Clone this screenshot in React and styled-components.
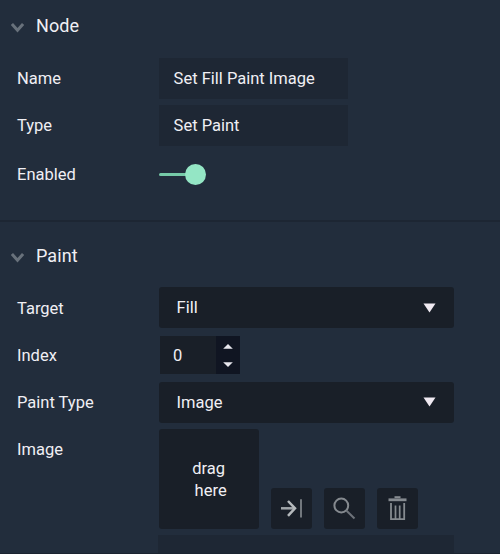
import React from "react";
import styled, { createGlobalStyle } from "styled-components";

const GlobalStyle = createGlobalStyle`
  * { box-sizing: border-box; }
  body {
    margin: 0;
    background: #222d3c;
    color: #f0eff4;
    font-family: Roboto, "Liberation Sans", sans-serif;
    overflow: hidden;
  }
`;

const Panel = styled.main`
  display: flex;
  flex-direction: column;
  height: 554px;
  overflow: hidden;
  border-bottom: 1px solid #1b2430;
`;

const Section = styled.section`
  flex: none;
  height: ${(p) => p.$height || "auto"};
  border-bottom: ${(p) => (p.$divided ? "2px solid #1d2633" : "none")};
`;

const SectionHeader = styled.header`
  display: flex;
  align-items: center;
  gap: 12px;
  height: ${(p) => p.$height}px;
  padding: ${(p) => p.$top || 0}px 0 ${(p) => p.$bottom || 0}px 11px;
`;

const Title = styled.h2`
  margin: 0;
  font-size: 18px;
  line-height: 24px;
  font-weight: 400;
  letter-spacing: 0.1px;
`;

const Rows = styled.div`
  display: grid;
  row-gap: 6.25px;
`;

const Row = styled.div`
  display: grid;
  grid-template-columns: 141.6px 1fr;
  min-height: 41px;
  padding-left: 17px;
  font-size: 16.5px;
  line-height: 41px;
`;

const Label = styled.span`
  margin: ${(p) => p.$drop || 0}px 0 ${(p) => -(p.$drop || 0)}px;
  white-space: nowrap;
`;

const Field = styled.div`
  width: 189px;
  height: 41px;
  padding-left: 15px;
  background: #1e2734;
`;

const Toggle = styled.div`
  display: flex;
  align-items: center;
  height: 41px;
  padding-top: 3px;
`;

const Track = styled.span`
  width: 27px;
  height: 3px;
  border-radius: 2px 0 0 2px;
  background: #76caa8;
`;

const Knob = styled.span`
  width: 21px;
  height: 21px;
  margin-left: -1px;
  border-radius: 50%;
  background: #94e6c5;
`;

const Select = styled.div`
  display: flex;
  align-items: center;
  justify-content: space-between;
  width: 295px;
  height: 41px;
  padding: 0 18px;
  border-radius: 3px;
  background: #191f28;
`;

const NumberInput = styled.div`
  display: grid;
  grid-template-columns: 56px 24px;
  width: 80px;
  height: 38px;
  margin: 1px 0 0 1.4px;
  line-height: 39px;
  background: #191f28;
`;

const NumberValue = styled.span`
  height: 38px;
  padding-left: 13px;
`;

const Stepper = styled.span`
  display: flex;
  flex-direction: column;
  align-items: center;
  justify-content: space-between;
  height: 38px;
  padding: 8px 0 7px;
  background: #101522;
`;

const ImageControls = styled.div`
  display: flex;
  align-items: flex-end;
  gap: 12px;
`;

const DropZone = styled.div`
  display: flex;
  flex-direction: column;
  align-items: center;
  justify-content: center;
  width: 100px;
  height: 100px;
  padding-top: 1px;
  border-radius: 3px;
  background: #191f28;
  line-height: 22px;
  white-space: pre;
`;

const IconButton = styled.button`
  display: grid;
  place-items: center;
  width: 41px;
  height: 41px;
  padding: 0;
  border: 0;
  border-radius: 3px;
  background: #191f28;
`;

const PathField = styled.div`
  width: 296px;
  height: 41px;
  margin-left: 158px;
  background: #1e2734;
`;

const Chevron = () => (
  <svg width="13" height="14" viewBox="0 0 13 14" fill="none" stroke="#68717b" strokeWidth="3">
    <path d="M.9 5 6.5 11.3 12.1 5" />
  </svg>
);

const Caret = () => (
  <svg width="13" height="10" viewBox="0 0 13 10">
    <path d="M.5.5h12L6.5 9.5Z" fill="#f0eaf2" />
  </svg>
);

const StepArrow = ({ down }) => (
  <svg width="10" height="5" viewBox="0 0 10 5">
    <path d={down ? "M.2.3h9.6L5 4.9Z" : "M.2 4.7h9.6L5 .1Z"} fill="#e8e7ee" />
  </svg>
);

const InsertIcon = () => (
  <svg width="41" height="41" viewBox="0 0 41 41" fill="none">
    <path d="M10 20.3h14" stroke="#a0a5a9" strokeWidth="2.5" />
    <path d="M17 13 24 20.3 17 27.8" stroke="#b5b9bc" strokeWidth="2.5" />
    <path d="M30 11.3v18.2" stroke="#7d8287" strokeWidth="1.8" />
  </svg>
);

const SearchIcon = () => (
  <svg width="41" height="41" viewBox="0 0 41 41" fill="none">
    <circle cx="17.3" cy="17.5" r="6.9" stroke="#858a8f" strokeWidth="2" />
    <path d="m22.3 22.5 8.2 8" stroke="#6e737a" strokeWidth="2" />
  </svg>
);

const TrashIcon = () => (
  <svg width="41" height="41" viewBox="0 0 41 41" fill="none" stroke="#858a8f">
    <path d="M17.5 9.2h6" strokeWidth="2" />
    <path d="M11.5 11.8h18" strokeWidth="2.8" />
    <path d="M14 15v16.2h13.2V15" strokeWidth="1.8" />
    <path d="M18.5 17.5V31M22.7 17.5V31" strokeWidth="1.7" />
  </svg>
);

export default function App() {
  return (
    <>
      <GlobalStyle />
      <Panel>
        <Section $height="222px" $divided>
          <SectionHeader $height={57.7} $bottom={6}>
            <Chevron />
            <Title>Node</Title>
          </SectionHeader>
          <Rows>
            <Row>
              <Label>Name</Label>
              <Field>Set Fill Paint Image</Field>
            </Row>
            <Row>
              <Label>Type</Label>
              <Field>Set Paint</Field>
            </Row>
            <Row>
              <Label $drop={2}>Enabled</Label>
              <Toggle role="switch" aria-checked="true" aria-label="Enabled">
                <Track />
                <Knob />
              </Toggle>
            </Row>
          </Rows>
        </Section>
        <Section>
          <SectionHeader $height={65.3} $top={2}>
            <Chevron />
            <Title>Paint</Title>
          </SectionHeader>
          <Rows>
            <Row>
              <Label $drop={1}>Target</Label>
              <Select>
                Fill
                <Caret />
              </Select>
            </Row>
            <Row>
              <Label>Index</Label>
              <NumberInput>
                <NumberValue>0</NumberValue>
                <Stepper>
                  <StepArrow />
                  <StepArrow down />
                </Stepper>
              </NumberInput>
            </Row>
            <Row>
              <Label>Paint Type</Label>
              <Select>
                Image
                <Caret />
              </Select>
            </Row>
            <Row>
              <Label>Image</Label>
              <ImageControls>
                <DropZone>
                  <span>drag</span>
                  <span> here</span>
                </DropZone>
                <IconButton aria-label="Insert">
                  <InsertIcon />
                </IconButton>
                <IconButton aria-label="Search">
                  <SearchIcon />
                </IconButton>
                <IconButton aria-label="Delete">
                  <TrashIcon />
                </IconButton>
              </ImageControls>
            </Row>
            <PathField />
          </Rows>
        </Section>
      </Panel>
    </>
  );
}
